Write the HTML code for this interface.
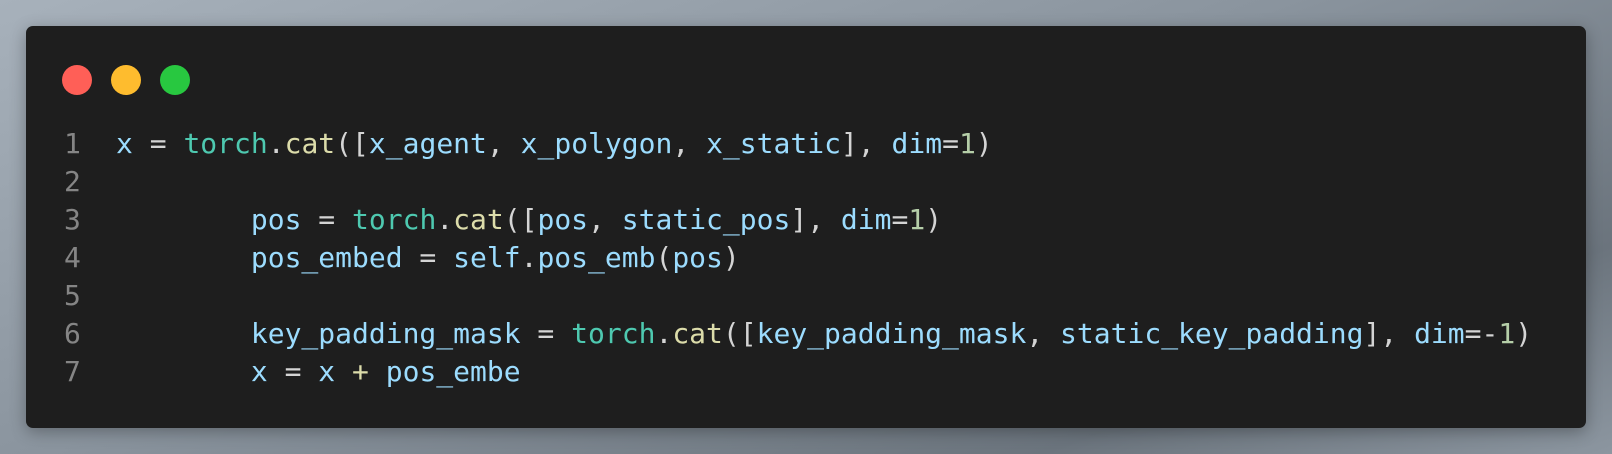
<!DOCTYPE html>
<html><head><meta charset="utf-8"><style>
html,body{margin:0;padding:0;}
body{width:1612px;height:454px;overflow:hidden;background:linear-gradient(160deg,#a7b1bb 0%,#8a949e 45%,#6b747d 80%,#8c96a0 100%);position:relative;font-family:"DejaVu Sans Mono","Liberation Mono",monospace;}
.win{position:absolute;left:26px;top:26px;width:1560px;height:402px;background:#1e1e1e;border-radius:7px;box-shadow:0 4px 16px rgba(0,0,0,.3);}
.dot{position:absolute;top:39px;width:30px;height:30px;border-radius:50%;}
.code{position:absolute;left:0;top:99px;font-size:28px;line-height:38px;color:#d4d4d4;}
.ln{position:absolute;left:38px;top:0;width:20px;color:#858585;}
.tx{position:absolute;left:90px;top:0;white-space:pre;}
.v{color:#9cdcfe}.t{color:#4ec9b0}.f{color:#dcdcaa}.n{color:#b5cea8}
</style></head><body>
<div class="win">
<div class="dot" style="left:36px;background:#ff5f57"></div>
<div class="dot" style="left:85px;background:#febc2e"></div>
<div class="dot" style="left:134px;background:#28c840"></div>
<div class="code"><div class="ln">1<br>2<br>3<br>4<br>5<br>6<br>7</div><div class="tx"><span class="v">x</span> = <span class="t">torch</span>.<span class="f">cat</span>([<span class="v">x_agent</span>, <span class="v">x_polygon</span>, <span class="v">x_static</span>], <span class="v">dim</span>=<span class="n">1</span>)
 
        <span class="v">pos</span> = <span class="t">torch</span>.<span class="f">cat</span>([<span class="v">pos</span>, <span class="v">static_pos</span>], <span class="v">dim</span>=<span class="n">1</span>)
        <span class="v">pos_embed</span> = <span class="v">self</span>.<span class="v">pos_emb</span>(<span class="v">pos</span>)
 
        <span class="v">key_padding_mask</span> = <span class="t">torch</span>.<span class="f">cat</span>([<span class="v">key_padding_mask</span>, <span class="v">static_key_padding</span>], <span class="v">dim</span>=-<span class="n">1</span>)
        <span class="v">x</span> = <span class="v">x</span> <span class="f">+</span> <span class="v">pos_embe</span></div></div>
</div>
</body></html>
